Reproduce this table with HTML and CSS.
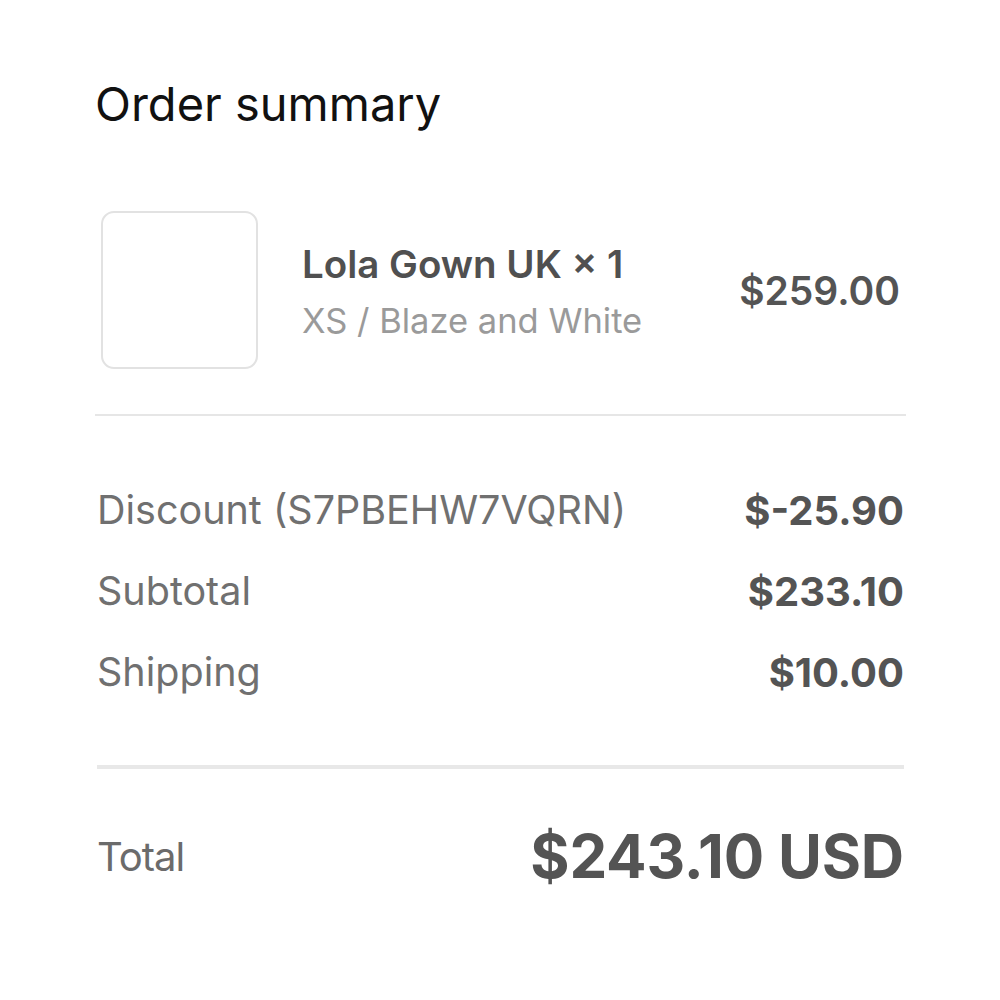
FILE: index.html
```html
<!DOCTYPE html>
<html lang="en">
<head>
    <meta charset="UTF-8">
    <meta name="viewport" content="width=device-width, initial-scale=1.0">
    <title>Order summary</title>
    <link rel="stylesheet" href="styles.css">
</head>
<body>

    <div class="summary">
        <h1>Order summary</h1>

        <div class="product">
            <div class="thumb"></div>
            <div class="product-info">
                <p class="product-name">Lola Gown UK × 1</p>
                <p class="product-variant">XS / Blaze and White</p>
            </div>
            <p class="product-price">$259.00</p>
        </div>

        <hr class="divider">

        <div class="lines">
            <div class="line">
                <span class="label">Discount (S7PBEHW7VQRN)</span>
                <span class="value">$-25.90</span>
            </div>
            <div class="line">
                <span class="label">Subtotal</span>
                <span class="value">$233.10</span>
            </div>
            <div class="line">
                <span class="label">Shipping</span>
                <span class="value">$10.00</span>
            </div>
        </div>

        <hr class="divider divider-thick">

        <div class="total">
            <span class="total-label">Total</span>
            <span class="total-value">$243.10 USD</span>
        </div>
    </div>

</body>
</html>
```

FILE: styles.css
```css
body {
    margin: 0;
    background: #fff;
    font-family: Inter, "Liberation Sans", Arial, sans-serif;
}

.summary {
    padding: 74px 94px 0 95px;
}

h1 {
    margin: 0;
    font-size: 47px;
    font-weight: 400;
    line-height: 60px;
    color: #111;
}

.product {
    display: flex;
    align-items: center;
    margin-top: 77px;
    padding: 0 6px;
}

.thumb {
    width: 153px;
    height: 154px;
    border: 2px solid #e2e2e2;
    border-radius: 13px;
    flex-shrink: 0;
}

.product-info {
    flex: 1;
    margin-left: 44px;
    padding-top: 4px;
}

.product-info p {
    margin: 0;
}

.product-name {
    font-size: 38.5px;
    font-weight: 600;
    line-height: 48px;
    color: #505050;
}

.product-variant {
    font-size: 34.5px;
    line-height: 48px;
    margin-top: 9px !important;
    color: #9a9a9a;
}

.product-price {
    margin: 0;
    font-size: 39px;
    font-weight: 600;
    color: #545454;
}

.divider {
    border: none;
    height: 2px;
    background: #e6e6e6;
    margin: 45px 0 0;
}

.lines {
    margin: 54px 2px 0;
}

.line {
    display: flex;
    justify-content: space-between;
    line-height: 81px;
    font-size: 40px;
}

.label {
    font-size: 39.5px;
    color: #707070;
}

.value {
    font-weight: 700;
    color: #545454;
}

.divider-thick {
    height: 4px;
    margin: 52px 2px 0;
    background: #e8e8e8;
}

.total {
    display: flex;
    justify-content: space-between;
    align-items: center;
    height: 120px;
    margin: 27px 2px 0;
}

.total-label {
    font-size: 40px;
    letter-spacing: -1px;
    color: #6b6b6b;
}

.total-value {
    font-size: 60px;
    font-weight: 700;
    letter-spacing: -0.2px;
    color: #545454;
}
```
